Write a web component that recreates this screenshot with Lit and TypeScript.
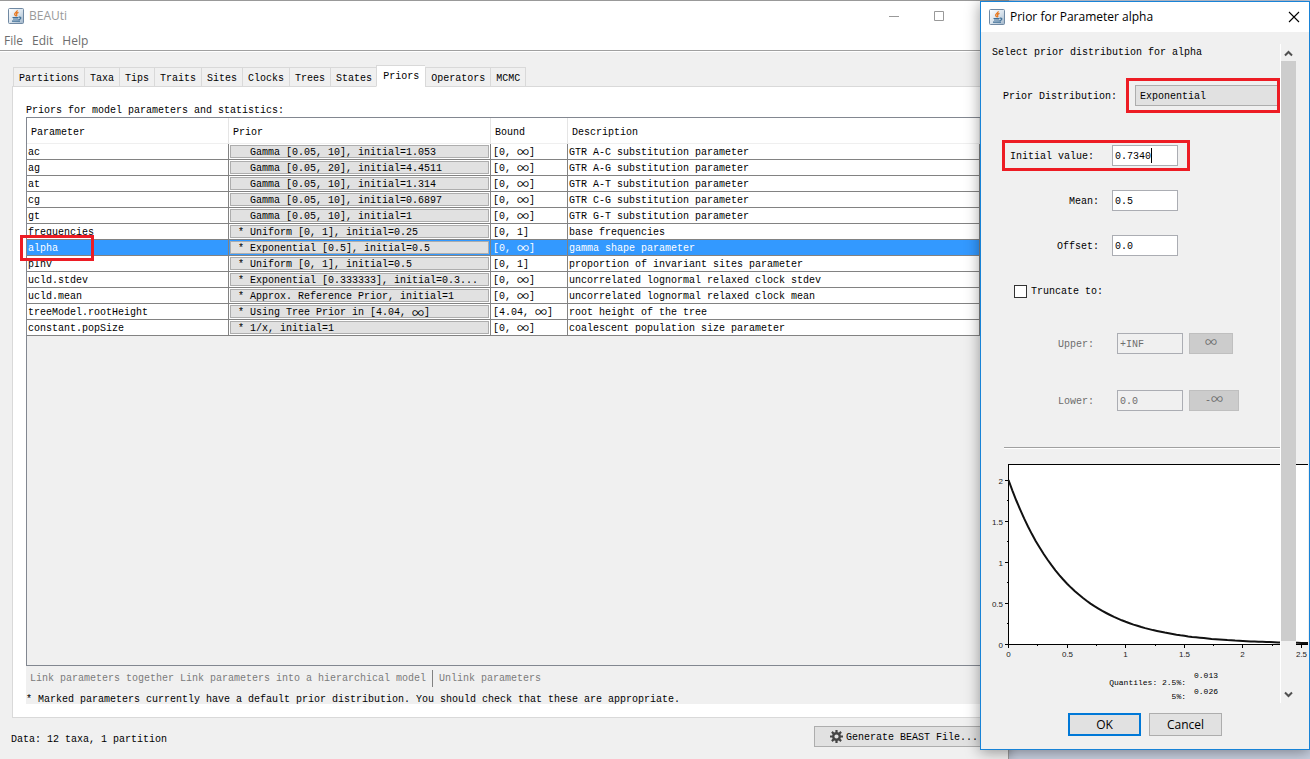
import { LitElement, html, svg, css } from "lit";
import { customElement } from "lit/decorators.js";

interface PriorRow {
  name: string;
  prior: string;
  marked?: boolean;
  bound: string;
  description: string;
  selected?: boolean;
}

const TABS = ["Partitions", "Taxa", "Tips", "Traits", "Sites", "Clocks", "Trees", "States", "Priors", "Operators", "MCMC"];

const ROWS: PriorRow[] = [
  { name: "ac", prior: "Gamma [0.05, 10], initial=1.053", bound: "[0, ∞]", description: "GTR A-C substitution parameter" },
  { name: "ag", prior: "Gamma [0.05, 20], initial=4.4511", bound: "[0, ∞]", description: "GTR A-G substitution parameter" },
  { name: "at", prior: "Gamma [0.05, 10], initial=1.314", bound: "[0, ∞]", description: "GTR A-T substitution parameter" },
  { name: "cg", prior: "Gamma [0.05, 10], initial=0.6897", bound: "[0, ∞]", description: "GTR C-G substitution parameter" },
  { name: "gt", prior: "Gamma [0.05, 10], initial=1", bound: "[0, ∞]", description: "GTR G-T substitution parameter" },
  { name: "frequencies", prior: "Uniform [0, 1], initial=0.25", marked: true, bound: "[0, 1]", description: "base frequencies" },
  { name: "alpha", prior: "Exponential [0.5], initial=0.5", marked: true, bound: "[0, ∞]", description: "gamma shape parameter", selected: true },
  { name: "pInv", prior: "Uniform [0, 1], initial=0.5", marked: true, bound: "[0, 1]", description: "proportion of invariant sites parameter" },
  { name: "ucld.stdev", prior: "Exponential [0.333333], initial=0.3...", marked: true, bound: "[0, ∞]", description: "uncorrelated lognormal relaxed clock stdev" },
  { name: "ucld.mean", prior: "Approx. Reference Prior, initial=1", marked: true, bound: "[0, ∞]", description: "uncorrelated lognormal relaxed clock mean" },
  { name: "treeModel.rootHeight", prior: "Using Tree Prior in [4.04, ∞]", marked: true, bound: "[4.04, ∞]", description: "root height of the tree" },
  { name: "constant.popSize", prior: "1/x, initial=1", marked: true, bound: "[0, ∞]", description: "coalescent population size parameter" },
];

/* The infinity sign takes a full-width cell, twice the width of a Latin one. */
const wide = (text: string) =>
  text.split("∞").map((part, i) => (i ? html`<span class="inf">∞</span>${part}` : part));

const javaIcon = () => html`<svg class="java" viewBox="0 0 16 16" aria-hidden="true">
  <defs>
    <linearGradient id="jg" x1="0" y1="0" x2="1" y2="1">
      <stop offset="0" stop-color="#ffffff" />
      <stop offset=".5" stop-color="#dbe5ee" />
      <stop offset="1" stop-color="#9fb4c8" />
    </linearGradient>
  </defs>
  <rect x=".5" y=".5" width="15" height="15" rx="1" fill="url(#jg)" stroke="#7089a3" />
  <path d="M9.200 2.200c.6 1.600-3 2.500-2.500 4.100.2.800.8 1.100.9 1.900M10.500 4.300c-1.600.6-2.400 1.300-1.800 2.200.4.700.1 1.200-.4 1.700" fill="none" stroke="#e8751a" stroke-width="1.300" />
  <path d="M4.500 9.500h6M5 11h5M4 13.200h8" fill="none" stroke="#3f6f97" stroke-width="1.200" />
  <path d="M10.800 9.200c2.900-.5 2.600 2-.4 2.400" fill="none" stroke="#3f6f97" stroke-width="1.200" />
</svg>`;

const base = css`
  :host {
    font-family: "Liberation Mono", monospace;
    font-size: 10px;
    line-height: 14px;
    color: #000;
  }
  * {
    box-sizing: border-box;
  }
  button,
  input,
  select {
    font: inherit;
    color: inherit;
    margin: 0;
    padding: 0;
    border-radius: 0;
    outline: none;
    appearance: none;
  }
  .java {
    width: 16px;
    height: 16px;
    flex: none;
  }
  .inf {
    display: inline-block;
    width: 12px;
    height: 9px;
    font: 12px/9px "Noto Sans CJK SC", sans-serif;
    text-align: center;
    vertical-align: top;
  }
  .mark {
    position: absolute;
    border: 3px solid #ed1c24;
    pointer-events: none;
  }
`;

@customElement("priors-table")
class PriorsTable extends LitElement {
  static styles = [
    base,
    css`
      :host {
        display: block;
      }
      table {
        border-spacing: 0;
        table-layout: fixed;
        width: calc(100% - 4px);
        background: #fff;
      }
      .c1 {
        width: 202px;
      }
      .c2 {
        width: 262px;
      }
      .c3 {
        width: 77px;
      }
      th {
        height: 26px;
        padding: 4px 4px 0;
        text-align: left;
        font-weight: 400;
        border-right: 1px solid #e5e5e5;
        border-bottom: 1px solid #efefef;
      }
      td {
        position: relative;
        height: 16px;
        padding: 3px 1px 0;
        line-height: 12px;
        white-space: nowrap;
        border-right: 1px solid #828282;
        border-bottom: 1px solid #828282;
      }
      td.prior {
        padding: 1px;
      }
      td.bound {
        padding-left: 2px;
      }
      .selected td {
        background: #3399ff;
        color: #fff;
      }
      td button {
        display: block;
        width: 100%;
        height: 13px;
        padding: 2px 0 0 7px;
        border: 1px solid #adadad;
        background: #e1e1e1;
        color: #000;
        line-height: 10px;
        text-align: left;
        white-space: pre;
      }
      .mark {
        left: -7px;
        top: -5px;
        width: 74px;
        height: 26px;
        z-index: 1;
      }
    `,
  ];

  render() {
    return html`<table>
      <colgroup>
        <col class="c1" /><col class="c2" /><col class="c3" /><col />
      </colgroup>
      <thead>
        <tr><th>Parameter</th><th>Prior</th><th>Bound</th><th>Description</th></tr>
      </thead>
      <tbody>
        ${ROWS.map(
          (r) => html`<tr class=${r.selected ? "selected" : ""}>
            <td>${r.name}${r.selected ? html`<span class="mark"></span>` : ""}</td>
            <td class="prior"><button type="button">${r.marked ? "* " : "  "}${wide(r.prior)}</button></td>
            <td class="bound">${wide(r.bound)}</td>
            <td>${r.description}</td>
          </tr>`
        )}
      </tbody>
    </table>`;
  }
}

@customElement("density-chart")
class DensityChart extends LitElement {
  static styles = css`
    :host {
      display: block;
      overflow: hidden;
    }
    svg {
      display: block;
      width: 327px;
      height: 204px;
    }
    text {
      font: 8px "Liberation Sans", sans-serif;
      fill: #222;
    }
    .axis {
      stroke: #000;
      fill: none;
      shape-rendering: crispEdges;
    }
    .curve {
      stroke: #111;
      stroke-width: 2;
      fill: none;
    }
  `;

  render() {
    const mean = 0.5;
    const x0 = 27;
    const y0 = 188;
    const sx = 117.2;
    const sy = 82;
    const px = (v: number) => x0 + Math.round(v * sx) + 0.5;
    const py = (v: number) => y0 - Math.round(v * sy) + 0.5;
    const points = Array.from({ length: 80 }, (_, i) => {
      const x = i / 30;
      return `${(x0 + 0.5 + x * sx).toFixed(1)},${(y0 - (sy / mean) * Math.exp(-x / mean)).toFixed(1)}`;
    }).join(" ");
    const xs = Array.from({ length: 11 }, (_, i) => i / 4);
    const ys = Array.from({ length: 9 }, (_, i) => i / 4);
    return html`<svg viewBox="0 0 327 204" role="img" aria-label="Exponential density">
      <rect x="27" y="8" width="300" height="180" fill="#fff" />
      <path class="axis" d="M327 8.500H27.500V188.500H327" />
      ${xs.map((v, i) => svg`<path class="axis" d="M${px(v)} 188v${i % 2 ? 2 : 4}" />
        ${i % 2 ? "" : svg`<text x=${px(v)} y="201" text-anchor="middle">${v}</text>`}`)}
      ${ys.map((v, i) => svg`<path class="axis" d="M28 ${py(v)}h${i % 2 ? -2 : -4}" />
        ${i % 2 ? "" : svg`<text x="22" y=${py(v) + 3} text-anchor="end">${v}</text>`}`)}
      <polyline class="curve" points=${points} />
    </svg>`;
  }
}

@customElement("prior-dialog")
class PriorDialog extends LitElement {
  static styles = [
    base,
    css`
      :host {
        display: block;
        background: #f0f0f0;
        border: 1px solid #1883d7;
        box-shadow: 0 2px 14px rgba(0, 0, 0, 0.4);
      }
      header {
        display: flex;
        align-items: center;
        gap: 5px;
        height: 30px;
        padding: 0 9px 0 8px;
        background: #fff;
        font: 12px/16px "Open Sans", sans-serif;
      }
      h2 {
        flex: 1;
        margin: 0;
        font: inherit;
      }
      .close {
        width: 12px;
        height: 12px;
        border: 0;
        background: none;
      }
      .close svg {
        display: block;
      }
      .scroll {
        position: relative;
        margin-top: 12px;
        height: 659px;
        overflow: hidden;
      }
      .bar {
        position: absolute;
        right: 13px;
        top: 0;
        bottom: 0;
        width: 16px;
        display: flex;
        flex-direction: column;
        background: #f0f0f0;
        border-left: 1px solid #fff;
      }
      .bar button {
        height: 17px;
        border: 0;
        background: none;
      }
      .bar svg {
        display: block;
        margin: 0 auto;
      }
      .thumb {
        height: 580px;
        margin-bottom: auto;
        background: #cdcdcd;
      }
      .intro {
        margin: 0;
        padding: 2px 11px 0;
      }
      .row {
        display: grid;
        align-items: center;
        height: 21px;
        margin-bottom: 24px;
      }
      .row label {
        padding-top: 2px;
        text-align: right;
      }
      .row.dist {
        grid-template-columns: 136px 143px;
        column-gap: 18px;
        margin: 25px 0 39px;
      }
      .boxed {
        position: relative;
      }
      .dist .mark {
        left: 145px;
        top: -7px;
        width: 154px;
        height: 35px;
      }
      .first .mark {
        left: 21px;
        top: -5px;
        width: 188px;
        height: 31px;
      }
      select,
      input.field {
        height: 21px;
        border: 1px solid #abadb3;
        padding: 2px 2px 0;
      }
      select {
        width: 143px;
        padding: 2px 4px 0;
        background: #e1e1e1;
        border-color: #adadad;
      }
      input.field {
        width: 66px;
        background: #fff;
      }
      .plain {
        grid-template-columns: 118px auto;
        column-gap: 13px;
      }
      .first {
        grid-template-columns: 113px auto;
        column-gap: 18px;
      }
      .entry {
        position: relative;
        display: flex;
      }
      .caret {
        position: absolute;
        left: 39px;
        top: 3px;
        width: 1px;
        height: 15px;
        background: #000;
      }
      .check {
        display: flex;
        align-items: center;
        gap: 4px;
        height: 14px;
        margin: 28px 0 35px 33px;
      }
      .check input {
        width: 13px;
        height: 13px;
        border: 1px solid #333;
        background: #fff;
      }
      .check label {
        padding-top: 2px;
      }
      .row.limit {
        grid-template-columns: 113px auto;
        column-gap: 23px;
        margin-bottom: 36px;
        color: #6d6d6d;
      }
      .limit input.field {
        background: #f0f0f0;
      }
      .pair {
        display: flex;
        gap: 6px;
      }
      .limit button {
        height: 21px;
        padding: 0 15px;
        border: 1px solid #bfbfbf;
        background: #ccc;
        white-space: nowrap;
      }
      hr {
        margin: 0 28px 7px 23px;
        border: 0;
        border-top: 1px solid #a0a0a0;
        border-bottom: 1px solid #fff;
      }
      .quantiles {
        display: grid;
        grid-template-columns: 205px auto;
        column-gap: 8px;
        align-items: start;
        margin-top: 8px;
        font-size: 8px;
        line-height: 14px;
      }
      .names {
        padding-top: 8px;
        text-align: right;
      }
      .values {
        line-height: 16px;
      }
      .actions {
        display: flex;
        justify-content: center;
        gap: 8px;
        padding: 10px 0 13px;
      }
      .actions button {
        width: 73px;
        height: 23px;
        border: 1px solid #adadad;
        background: #e1e1e1;
        font: 12px/16px "Open Sans", sans-serif;
      }
      .actions .ok {
        border: 2px solid #0078d7;
      }
    `,
  ];

  render() {
    return html`
      <header>
        ${javaIcon()}
        <h2>Prior for Parameter alpha</h2>
        <button class="close" type="button" aria-label="Close">
          <svg width="12" height="12"><path d="M1 1l10 10M11 1L1 11" stroke="#000" stroke-width="1.100" /></svg>
        </button>
      </header>
      <div class="scroll">
        <p class="intro">Select prior distribution for alpha</p>
        <div class="row dist boxed">
          <label for="dist">Prior Distribution:</label>
          <select id="dist"><option>Exponential</option></select>
          <span class="mark"></span>
        </div>
        <div class="row first boxed">
          <label for="initial">Initial value:</label>
          <span class="entry"><input class="field" id="initial" .value=${"0.7340"} /><span class="caret"></span></span>
          <span class="mark"></span>
        </div>
        <div class="row plain">
          <label for="mean">Mean:</label>
          <input class="field" id="mean" .value=${"0.5"} />
        </div>
        <div class="row plain">
          <label for="offset">Offset:</label>
          <input class="field" id="offset" .value=${"0.0"} />
        </div>
        <div class="check">
          <input type="checkbox" id="truncate" /><label for="truncate">Truncate to:</label>
        </div>
        <div class="row limit">
          <label for="upper">Upper:</label>
          <span class="pair">
            <input class="field" id="upper" disabled .value=${"+INF"} />
            <button type="button" disabled>${wide("∞")}</button>
          </span>
        </div>
        <div class="row limit">
          <label for="lower">Lower:</label>
          <span class="pair">
            <input class="field" id="lower" disabled .value=${"0.0"} />
            <button type="button" disabled>${wide("-∞")}</button>
          </span>
        </div>
        <hr />
        <density-chart></density-chart>
        <div class="quantiles">
          <div class="names">Quantiles: 2.5%:<br />5%:</div>
          <div class="values">0.013<br />0.026</div>
        </div>
        <div class="bar">
          <button type="button" aria-label="Scroll up">
            <svg width="9" height="8"><path d="M1 6.500L4.500 3L8 6.500" fill="none" stroke="#505050" stroke-width="2" /></svg>
          </button>
          <div class="thumb"></div>
          <button type="button" aria-label="Scroll down">
            <svg width="9" height="8"><path d="M1 1.500L4.500 5L8 1.500" fill="none" stroke="#505050" stroke-width="2" /></svg>
          </button>
        </div>
      </div>
      <div class="actions">
        <button class="ok" type="button">OK</button>
        <button type="button">Cancel</button>
      </div>
    `;
  }
}

@customElement("app-root")
class AppRoot extends LitElement {
  static styles = [
    base,
    css`
      :host {
        display: block;
        position: relative;
        overflow: hidden;
        min-height: 100vh;
        background: #c9d1e1;
      }
      .window {
        display: flex;
        flex-direction: column;
        min-height: 100vh;
        width: calc(100% - 301px);
        background: #f0f0f0;
        border-top: 1px solid #999;
        border-right: 1px solid #999;
        box-shadow: 0 0 10px rgba(0, 0, 0, 0.3);
      }
      .title {
        display: flex;
        align-items: center;
        gap: 5px;
        height: 30px;
        padding: 0 49px 0 8px;
        background: #fff;
        color: #999;
        font: 12px/16px "Open Sans", sans-serif;
      }
      h1 {
        flex: 1;
        margin: 0;
        font: inherit;
      }
      .cap {
        width: 40px;
        height: 28px;
        border: 0;
        background: none;
      }
      .cap svg {
        display: block;
        margin: 0 auto;
      }
      .menu {
        display: flex;
        gap: 9px;
        height: 20px;
        padding: 0 4px;
        background: #fff;
        border-bottom: 1px solid #a0a0a0;
        font: 12px/18px "Open Sans", sans-serif;
      }
      .menu button {
        border: 0;
        background: none;
        color: #6d6d6d;
      }
      .tabs {
        display: flex;
        align-items: flex-end;
        margin: 0 0 -1px 13px;
        padding-top: 13px;
      }
      .tab {
        height: 20px;
        padding: 3px 5px 0;
        border: 1px solid #d9d9d9;
        border-right: 0;
        background: #f0f0f0;
      }
      .tab:last-child {
        border-right: 1px solid #d9d9d9;
      }
      .tab.active {
        position: relative;
        height: 22px;
        margin-left: -1px;
        padding: 2px 6px 0;
        border-bottom-color: #fff;
        background: #fff;
      }
      .edge {
        height: 1px;
        background: #fff;
      }
      .panel {
        flex: 1;
        display: flex;
        flex-direction: column;
        margin: 0 11px 0 12px;
        padding: 17px 11px 13px 13px;
        background: #fff;
        border: 1px solid #d9d9d9;
      }
      .caption {
        margin: 0;
        height: 13px;
      }
      .pane {
        flex: 1;
        background: #f0f0f0;
        border: 1px solid #828790;
      }
      .foot {
        height: 38px;
        overflow: hidden;
        background: #f0f0f0;
      }
      .links {
        display: flex;
        align-items: center;
        gap: 6px;
        height: 25px;
        margin-bottom: 2px;
        padding-left: 4px;
      }
      .links button {
        border: 0;
        background: none;
        color: #7b7b7b;
      }
      .links i {
        width: 1px;
        height: 17px;
        background: #828282;
      }
      .foot p {
        margin: 0;
      }
      .status {
        display: flex;
        align-items: center;
        justify-content: space-between;
        height: 41px;
        padding: 2px 11px 0;
      }
      .generate {
        display: flex;
        align-items: center;
        gap: 3px;
        width: 183px;
        height: 21px;
        margin-bottom: 6px;
        padding: 0 15px;
        border: 1px solid #adadad;
        background: #e1e1e1;
      }
      .generate span {
        padding-top: 2px;
      }
      prior-dialog {
        position: absolute;
        top: 1px;
        right: 0;
        width: 330px;
      }
    `,
  ];

  render() {
    return html`
      <div class="window">
        <div class="title">
          ${javaIcon()}
          <h1>BEAUti</h1>
          <button class="cap" type="button" aria-label="Minimize">
            <svg width="11" height="11"><path d="M0 5.500h10" stroke="#999" /></svg>
          </button>
          <button class="cap" type="button" aria-label="Maximize">
            <svg width="11" height="11"><path d="M.5.5h9v9h-9z" fill="none" stroke="#999" /></svg>
          </button>
        </div>
        <nav class="menu">
          <button type="button">File</button><button type="button">Edit</button><button type="button">Help</button>
        </nav>
        <div class="edge"></div>
        <div class="tabs">
          ${TABS.map((t) => html`<button type="button" class=${t === "Priors" ? "tab active" : "tab"}>${t}</button>`)}
        </div>
        <main class="panel">
          <p class="caption">Priors for model parameters and statistics:</p>
          <div class="pane"><priors-table></priors-table></div>
          <div class="foot">
            <div class="links">
              <button type="button">Link parameters together</button>
              <button type="button">Link parameters into a hierarchical model</button>
              <i></i>
              <button type="button">Unlink parameters</button>
            </div>
            <p>* Marked parameters currently have a default prior distribution. You should check that these are appropriate.</p>
          </div>
        </main>
        <div class="status">
          <span>Data: 12 taxa, 1 partition</span>
          <button class="generate" type="button">
            <svg width="13" height="13" viewBox="0 0 13 13" aria-hidden="true">
              <circle cx="6.500" cy="6.500" r="3.300" fill="none" stroke="#444" stroke-width="2.400" />
              <path d="M6.500 0v2.500M6.500 10.500V13M0 6.500h2.500M10.500 6.500H13M1.900 1.900l1.800 1.800M9.300 9.300l1.800 1.800M11.100 1.900L9.300 3.700M3.700 9.300l-1.800 1.800" stroke="#444" stroke-width="2.200" />
            </svg>
            <span>Generate BEAST File...</span>
          </button>
        </div>
      </div>
      <prior-dialog></prior-dialog>
    `;
  }
}
